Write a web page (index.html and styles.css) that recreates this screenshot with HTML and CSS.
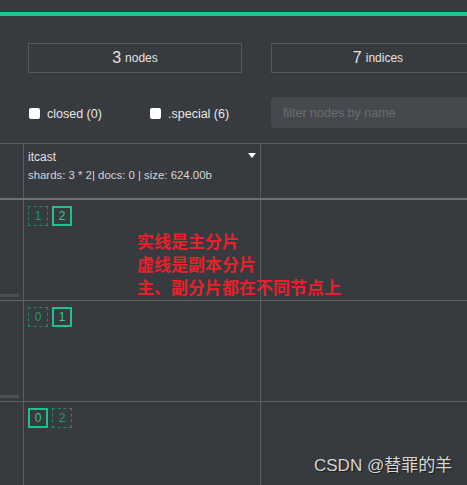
FILE: index.html
```html
<!DOCTYPE html>
<html lang="zh">
<head>
<meta charset="utf-8">
<link rel="stylesheet" href="styles.css">
</head>
<body>
<div class="page">
  <div class="topbar"></div>
  <div class="overview">
    <div class="stat"><span class="num">3</span> nodes</div>
    <div class="stat"><span class="num">7</span> indices</div>
  </div>
  <div class="filters">
    <div class="checks">
      <label class="check"><input type="checkbox"> closed (0)</label>
      <label class="check"><input type="checkbox"> .special (6)</label>
    </div>
    <input class="filter" type="text" placeholder="filter nodes by name">
  </div>
  <div class="table">
    <div class="row head">
      <div class="cell side"></div>
      <div class="cell main">
        <div class="index-name"><span>itcast</span><span class="caret"></span></div>
        <div class="index-meta">shards: 3 * 2| docs: 0 | size: 624.00b</div>
      </div>
      <div class="cell rest"></div>
    </div>
    <div class="row node">
      <div class="cell side"><div class="bar"></div></div>
      <div class="cell main">
        <div class="shards"><span class="shard replica">1</span><span class="shard primary">2</span></div>
      </div>
      <div class="cell rest"></div>
    </div>
    <div class="row node">
      <div class="cell side"><div class="bar"></div></div>
      <div class="cell main">
        <div class="shards"><span class="shard replica">0</span><span class="shard primary">1</span></div>
      </div>
      <div class="cell rest"></div>
    </div>
    <div class="row node last">
      <div class="cell side"></div>
      <div class="cell main">
        <div class="shards"><span class="shard primary">0</span><span class="shard replica">2</span></div>
      </div>
      <div class="cell rest"></div>
    </div>
  </div>
  <div class="note">实线是主分片<br>虚线是副本分片<br>主、副分片都在不同节点上</div>
  <div class="watermark">CSDN @替罪的羊</div>
</div>
</body>
</html>
```
FILE: styles.css
```css
* { box-sizing: border-box; }
html, body {
  margin: 0;
  padding: 0;
  background: #373a3e;
  overflow: hidden;
}
body {
  width: 467px;
  height: 485px;
  font-family: "Liberation Sans", Arial, "Noto Sans CJK SC", sans-serif;
  color: #dcdcdc;
}
.page {
  position: relative;
  height: 485px;
}
.topbar {
  margin-top: 12px;
  height: 4px;
  background: #20c48f;
}
.overview {
  display: grid;
  grid-template-columns: 214px 214px;
  column-gap: 29px;
  padding-left: 28px;
  margin-top: 27px;
}
.stat {
  height: 30px;
  border: 1px solid #55585c;
  display: flex;
  align-items: center;
  justify-content: center;
  font-size: 12px;
  color: #e2e2e2;
  gap: 4px;
}
.stat .num {
  font-size: 16px;
}
.filters {
  display: grid;
  grid-template-columns: 243px 214px;
  padding-left: 28px;
  margin-top: 24px;
  align-items: center;
}
.checks {
  display: flex;
  align-items: center;
  padding-left: 1px;
  padding-top: 2px;
}
.check {
  display: flex;
  align-items: center;
  gap: 7px;
  font-size: 12.5px;
  color: #e6e6e6;
}
.check:first-child {
  width: 121px;
}
.check input {
  appearance: none;
  -webkit-appearance: none;
  width: 11px;
  height: 11px;
  margin: 0;
  background: #ffffff;
  border-radius: 2px;
  border: none;
}
.filter {
  height: 31px;
  width: 220px;
  border: none;
  border-radius: 4px;
  background: #45484c;
  padding: 0 12px;
  font-family: "Liberation Sans", Arial, sans-serif;
  font-size: 12.5px;
  color: #ddd;
  outline: none;
}
.filter::placeholder {
  color: #6b6e72;
}
.table {
  margin-top: 15px;
  border-top: 1px solid #5a5d61;
}
.row {
  display: flex;
}
.row.head {
  height: 56px;
  border-bottom: 2px solid #6e7174;
}
.row.node {
  height: 101px;
  border-bottom: 1px solid #5f6266;
}
.row.node.last {
  height: 90px;
  border-bottom: none;
}
.cell.side {
  width: 23px;
  display: flex;
  flex-direction: column;
  justify-content: flex-end;
  padding-bottom: 3px;
}
.bar {
  width: 19px;
  height: 3px;
  background: #4b4e52;
}
.cell.main {
  width: 237px;
  border-left: 1px solid #5a5d61;
  padding: 4px 4px 0 4px;
}
.cell.rest {
  flex: 1;
  border-left: 1px solid #5a5d61;
}
.index-name {
  display: flex;
  justify-content: space-between;
  align-items: flex-start;
  font-size: 12px;
  line-height: 15px;
  color: #e2e2e2;
  padding-top: 2px;
}
.caret {
  width: 0;
  height: 0;
  border-left: 4px solid transparent;
  border-right: 4px solid transparent;
  border-top: 5px solid #ffffff;
  margin-top: 3px;
  margin-right: 0;
}
.index-meta {
  font-size: 11.4px;
  margin-top: 4px;
  color: #d6d6d6;
}
.shards {
  display: flex;
  gap: 4px;
  padding-top: 2px;
}
.shard {
  width: 20px;
  height: 20px;
  display: flex;
  align-items: center;
  justify-content: center;
  font-size: 12px;
}
.shard.primary {
  border: 2px solid #1fc08c;
  color: #2fcc98;
}
.shard.replica {
  border: 1px dashed #1c8c68;
  color: #1f9a72;
}
.note {
  position: absolute;
  left: 137px;
  top: 217px;
  font-family: "Noto Sans CJK SC", sans-serif;
  font-weight: 700;
  font-size: 17px;
  line-height: 23px;
  letter-spacing: 0;
  color: #e5222b;
}
.watermark {
  position: absolute;
  left: 314px;
  top: 443px;
  font-family: "Liberation Sans", "Noto Sans CJK SC", sans-serif;
  font-size: 17px;
  line-height: 22px;
  color: #d6d6d6;
  text-shadow: 1px 1px 1px #1a1a1a;
}
```
